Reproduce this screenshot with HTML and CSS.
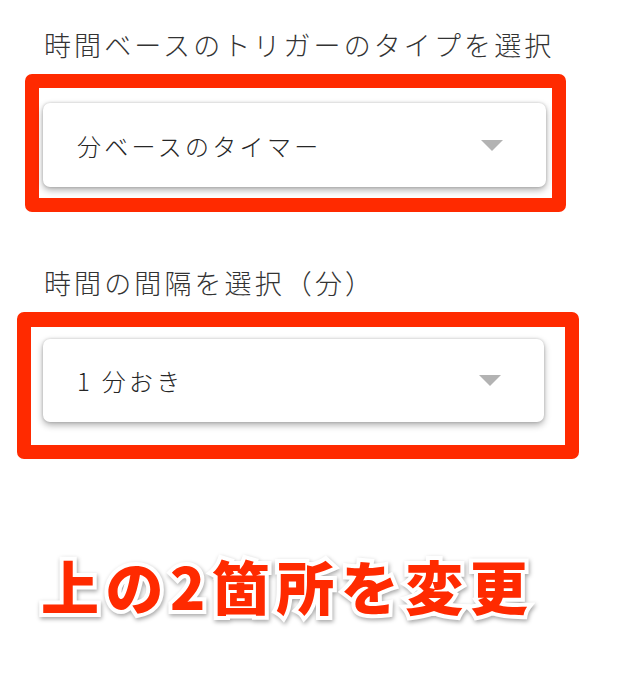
FILE: index.html
```html
<!DOCTYPE html>
<html lang="ja">
<head>
<meta charset="utf-8">
<link rel="stylesheet" href="styles.css">
</head>
<body>
<main class="page">
  <section class="field field-type">
    <div class="label">時間ベースのトリガーのタイプを選択</div>
    <div class="mark mark-1">
      <div class="select">
        <span class="select-text">分ベースのタイマー</span>
        <span class="caret"></span>
      </div>
    </div>
  </section>
  <section class="field field-interval">
    <div class="label">時間の間隔を選択（分）</div>
    <div class="mark mark-2">
      <div class="select">
        <span class="select-text">1 分おき</span>
        <span class="caret"></span>
      </div>
    </div>
  </section>
  <p class="note">上の2箇所を変更</p>
</main>
</body>
</html>
```

FILE: styles.css
```css
html, body {
  margin: 0;
  padding: 0;
  background: #ffffff;
}

body {
  font-family: "Noto Sans CJK JP", "Noto Sans", sans-serif;
  width: 618px;
  height: 680px;
  overflow: hidden;
}

.page {
  display: flex;
  flex-direction: column;
  padding-top: 28px;
}

.field {
  display: flex;
  flex-direction: column;
}

.field-interval {
  margin-top: 54px;
}

.label {
  margin-left: 44px;
  font-size: 27px;
  font-weight: 300;
  line-height: 34px;
  letter-spacing: 3.1px;
  color: #333333;
  white-space: nowrap;
}

.mark {
  box-sizing: border-box;
  margin-top: 12px;
  border: 14px solid #ff2a00;
  border-radius: 7px;
  background: #ffffff;
}

.mark-1 {
  margin-left: 25px;
  width: 541px;
  padding: 15px 6px 11px 4px;
}

.mark-2 {
  margin-left: 17px;
  width: 562px;
  border-top-width: 15px;
  padding: 12px 21px 23px 12px;
}

.select {
  height: 84px;
  box-sizing: border-box;
  display: flex;
  align-items: center;
  justify-content: space-between;
  padding: 0 43px 0 34px;
  background: #ffffff;
  border-radius: 7px;
  box-shadow: 0 3px 7px rgba(0, 0, 0, 0.32), 0 0 3px rgba(0, 0, 0, 0.18);
}

.mark-2 .select {
  height: 83px;
}

.select-text {
  font-size: 24px;
  font-weight: 300;
  letter-spacing: 3.3px;
  color: #262626;
  white-space: nowrap;
}

.caret {
  width: 0;
  height: 0;
  border-left: 11px solid transparent;
  border-right: 11px solid transparent;
  border-top: 11px solid #b3b3b3;
}

.note {
  margin: 94px 0 0 41px;
  font-size: 58px;
  line-height: 64px;
  font-weight: 900;
  letter-spacing: 6.5px;
  color: #ff2a00;
  -webkit-text-stroke: 8px #ffffff;
  paint-order: stroke fill;
  filter: drop-shadow(1px 2px 2px rgba(0, 0, 0, 0.35));
  white-space: nowrap;
}
```
